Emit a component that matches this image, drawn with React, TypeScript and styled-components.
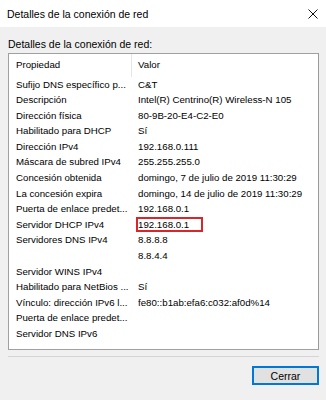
import styled, { createGlobalStyle } from "styled-components";

const GlobalStyle = createGlobalStyle`
  html, body {
    margin: 0;
    padding: 0;
    background: #f0f0f0;
  }
  * {
    box-sizing: border-box;
  }
`

const Window = styled.div`
  width: 326px;
  height: 400px;
  display: flex;
  flex-direction: column;
  font-family: "Liberation Sans", Arial, sans-serif;
  color: #000;
  overflow: hidden;
`

const TitleBar = styled.div`
  height: 27px;
  background: #fff;
  display: flex;
  align-items: center;
  justify-content: space-between;
  padding: 0 8px 0 7px;
  font-size: 10.5px;
`

const CloseIcon = styled.svg`
  width: 10px;
  height: 10px;
  margin-right: 0;
`

const Body = styled.div`
  flex: 1;
  background: #f0f0f0;
  display: flex;
  flex-direction: column;
  padding: 0 7px 0 8px;
`

const GroupLabel = styled.div`
  margin-top: 10px;
  height: 14px;
  line-height: 14px;
  font-size: 10.5px;
`

const ListBox = styled.div`
  margin-top: 2px;
  height: 297px;
  background: #fff;
  border: 1px solid #a0a0a0;
  border-right-color: #9a9a9a;
  font-size: 9.7px;
`

const Row = styled.div<{ $header?: boolean }>`
  display: grid;
  grid-template-columns: 123px 1fr;
  height: ${(p) => (p.$header ? "22.5px" : "15.6px")};
  line-height: ${(p) => (p.$header ? "22.5px" : "15.6px")};
  white-space: nowrap;
`

const Cell = styled.div<{ $divider?: boolean; $value?: boolean }>`
  padding-left: ${(p) => (p.$value ? "6px" : "7px")};
  border-right: ${(p) => (p.$divider ? "1px solid #e5e5e5" : "none")};
  overflow: hidden;
`

const Highlight = styled.span`
  display: inline-block;
  margin-left: -2px;
  padding: 0 12px 0 0;
  height: 15px;
  line-height: 11px;
  border: 2px solid #d8262b;
  vertical-align: top;
  margin-top: 0.5px;
`

const Separator = styled.div`
  margin-top: 6px;
  height: 1px;
  background: #d5d5d5;
`

const Footer = styled.div`
  display: flex;
  justify-content: flex-end;
  margin-top: 9px;
`

const Button = styled.button`
  width: 67px;
  height: 19px;
  padding: 0;
  background: #e1e1e1;
  border: 1px solid #0078d7;
  box-shadow: inset 0 0 0 1px #0078d7;
  font-family: "Liberation Sans", Arial, sans-serif;
  font-size: 10.5px;
  color: #000;
`

type Item = { name: string; value: string; mark?: boolean }

const items: Item[] = [
  { name: "Sufijo DNS específico p...", value: "C&T" },
  { name: "Descripción", value: "Intel(R) Centrino(R) Wireless-N 105" },
  { name: "Dirección física", value: "80-9B-20-E4-C2-E0" },
  { name: "Habilitado para DHCP", value: "Sí" },
  { name: "Dirección IPv4", value: "192.168.0.111" },
  { name: "Máscara de subred IPv4", value: "255.255.255.0" },
  { name: "Concesión obtenida", value: "domingo, 7 de julio de 2019 11:30:29" },
  { name: "La concesión expira", value: "domingo, 14 de julio de 2019 11:30:29" },
  { name: "Puerta de enlace predet...", value: "192.168.0.1" },
  { name: "Servidor DHCP IPv4", value: "192.168.0.1", mark: true },
  { name: "Servidores DNS IPv4", value: "8.8.8.8" },
  { name: "", value: "8.8.4.4" },
  { name: "Servidor WINS IPv4", value: "" },
  { name: "Habilitado para NetBios ...", value: "Sí" },
  { name: "Vínculo: dirección IPv6 l...", value: "fe80::b1ab:efa6:c032:af0d%14" },
  { name: "Puerta de enlace predet...", value: "" },
  { name: "Servidor DNS IPv6", value: "" },
]

export default function App() {
  return (
    <Window>
      <GlobalStyle />
      <TitleBar>
        <span>Detalles de la conexión de red</span>
        <CloseIcon viewBox="0 0 10 10">
          <path d="M0.5 0.5 L9.5 9.5 M9.5 0.5 L0.5 9.5" stroke="#111" strokeWidth="1" fill="none" />
        </CloseIcon>
      </TitleBar>
      <Body>
        <GroupLabel>Detalles de la conexión de red:</GroupLabel>
        <ListBox>
          <Row $header>
            <Cell $divider>Propiedad</Cell>
            <Cell $value>Valor</Cell>
          </Row>
          {items.map((it, i) => (
            <Row key={i}>
              <Cell>{it.name}</Cell>
              <Cell $value>
                {it.mark ? <Highlight>{it.value}</Highlight> : it.value}
              </Cell>
            </Row>
          ))}
        </ListBox>
        <Separator />
        <Footer>
          <Button>Cerrar</Button>
        </Footer>
      </Body>
    </Window>
  )
}
